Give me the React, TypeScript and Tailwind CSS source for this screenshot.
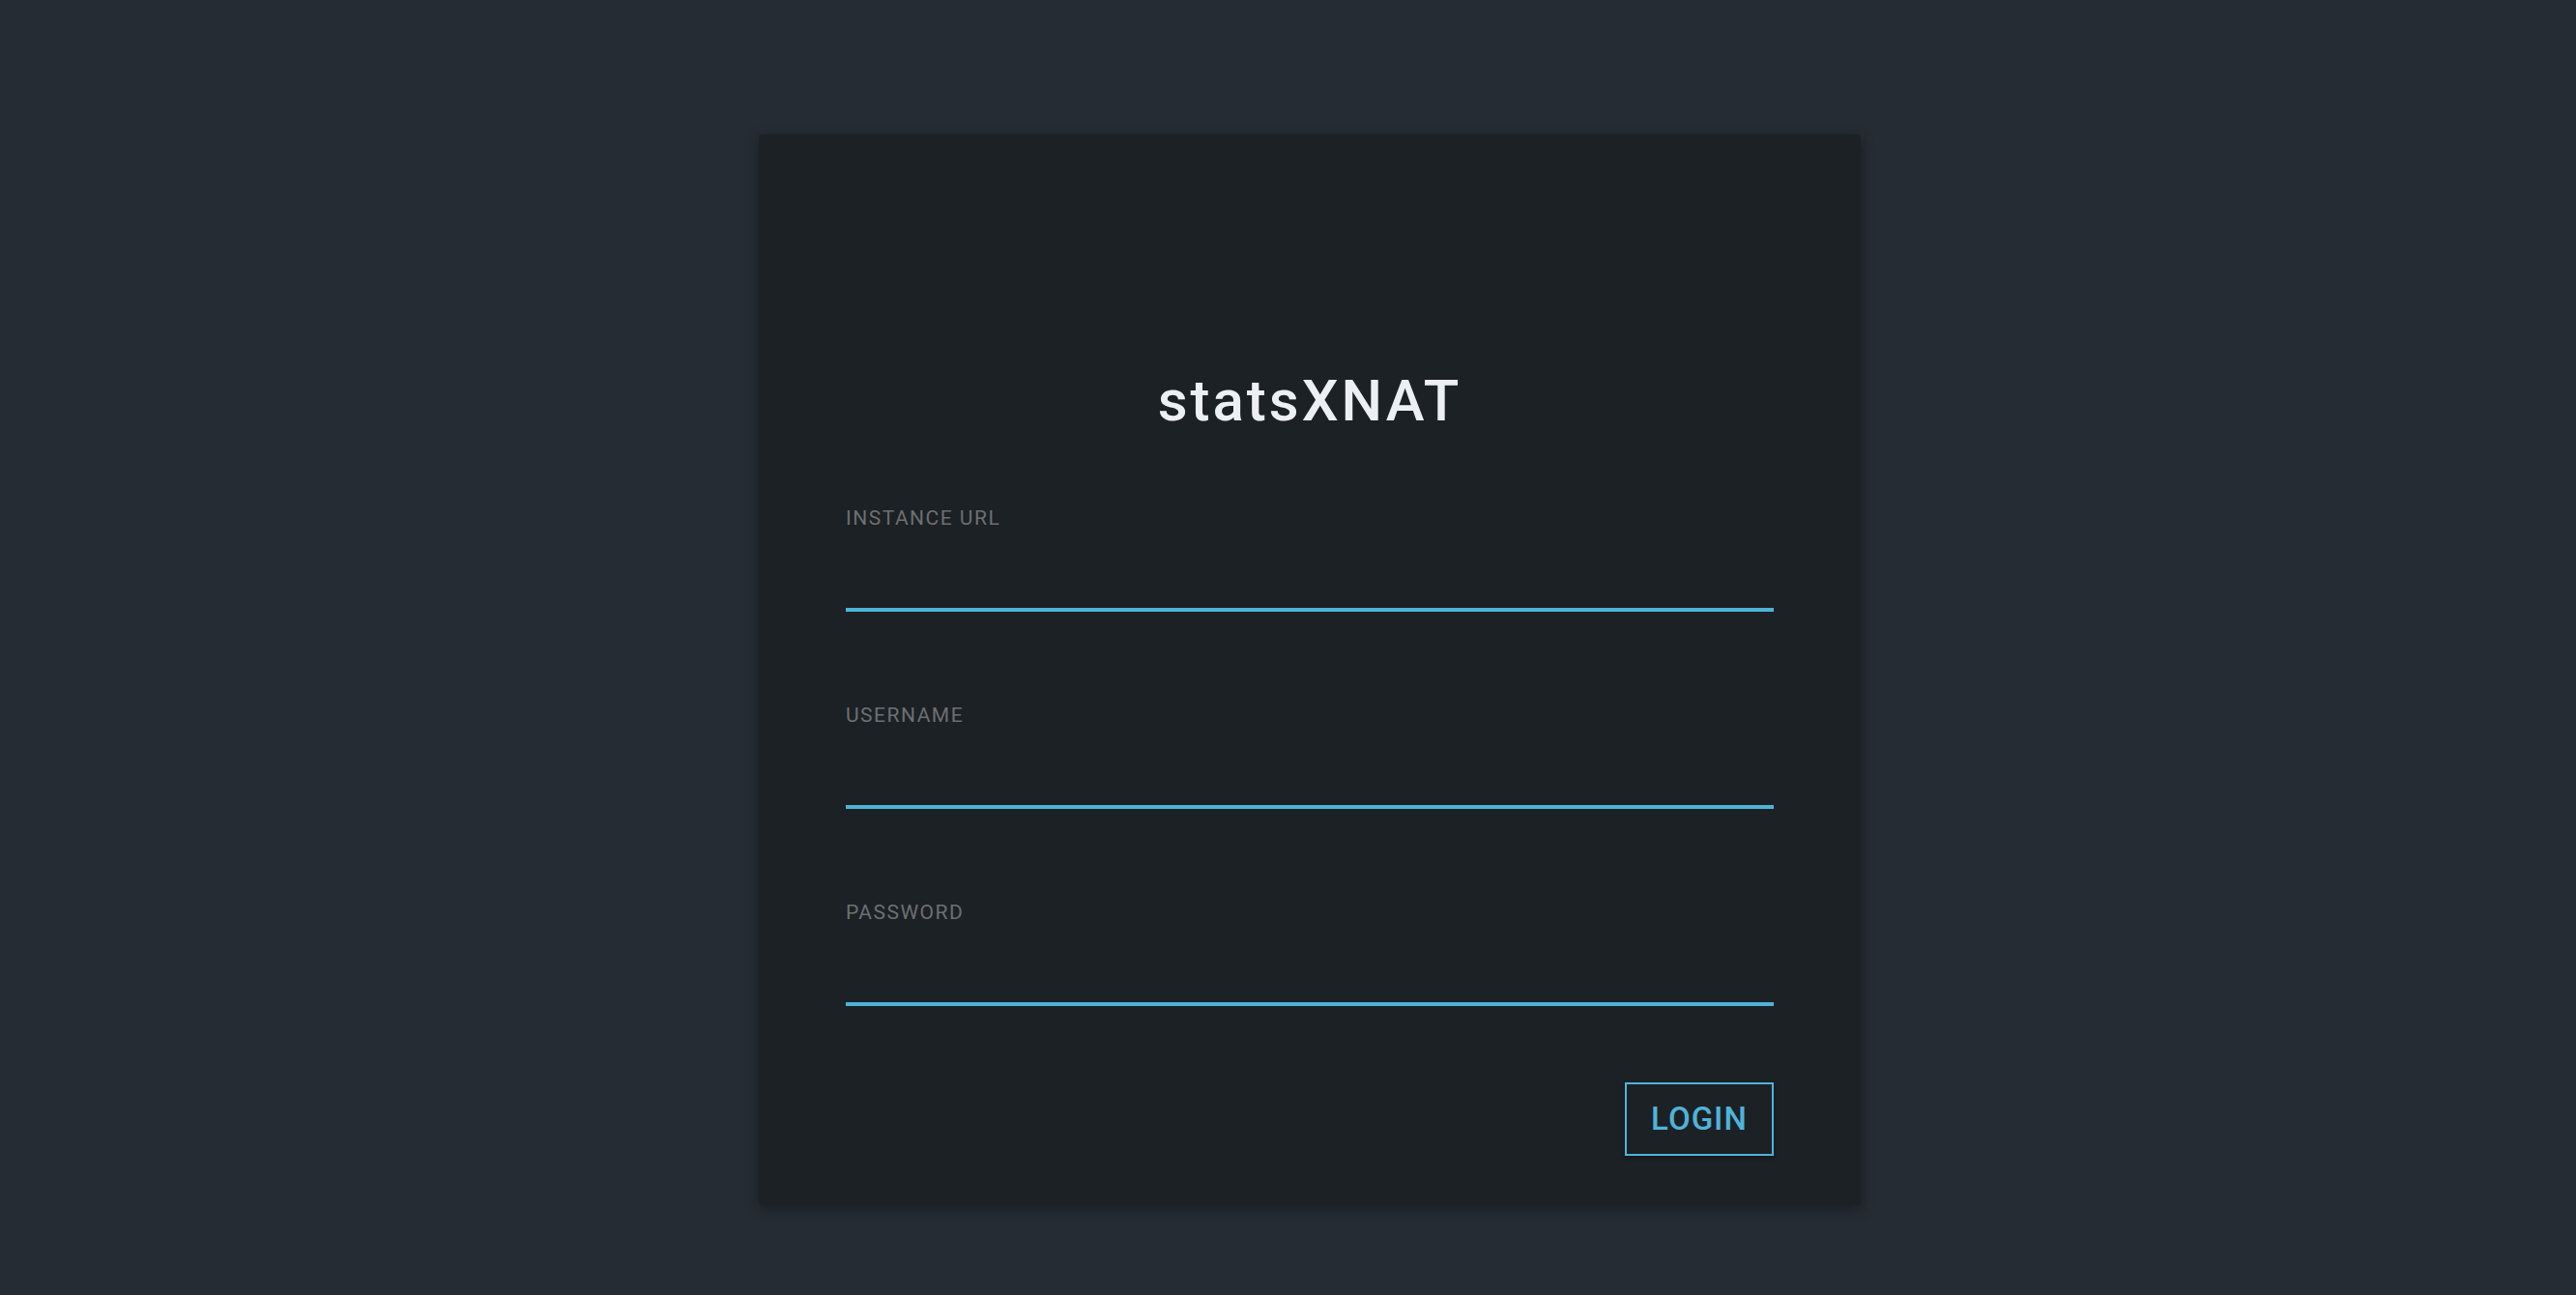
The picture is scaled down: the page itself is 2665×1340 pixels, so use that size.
import React from "react";

function Field({ label, type }: { label: string; type: string }) {
  return (
    <div className="flex flex-col">
      <label className="text-[21px] leading-[24px] tracking-[1.5px] text-[#6c6f71]">{label}</label>
      <input
        type={type}
        className="h-[85px] w-full border-b-4 border-[#4db3d9] bg-transparent text-[24px] text-[#eceff4] outline-none"
      />
    </div>
  );
}

export default function App() {
  return (
    <div
      className="min-h-screen w-full bg-[#262c34] pl-[785px] pt-[139px]"
      style={{ fontFamily: "Roboto, 'Noto Sans', sans-serif" }}
    >
      <div className="flex h-[1108px] w-[1140px] flex-col rounded-[3px] bg-[#1c2125] px-[90px] pt-[240px] shadow-[0_4px_14px_rgba(0,0,0,0.35)]">
        <h1 className="mb-[73px] text-center text-[60px] font-medium leading-[72px] tracking-[3px] text-[#eceff4]">statsXNAT</h1>
        <div className="flex flex-col gap-[95px]">
          <Field label="INSTANCE URL" type="text" />
          <Field label="USERNAME" type="text" />
          <Field label="PASSWORD" type="password" />
        </div>
        <div className="mt-[79px] flex justify-end">
          <button className="flex h-[76px] w-[154px] items-center justify-center border-2 border-[#4fb3d9] text-[33px] font-medium tracking-[1px] text-[#4fb3d9] shadow-[0_2px_4px_rgba(0,0,0,0.3)]">
            LOGIN
          </button>
        </div>
      </div>
    </div>
  );
}
